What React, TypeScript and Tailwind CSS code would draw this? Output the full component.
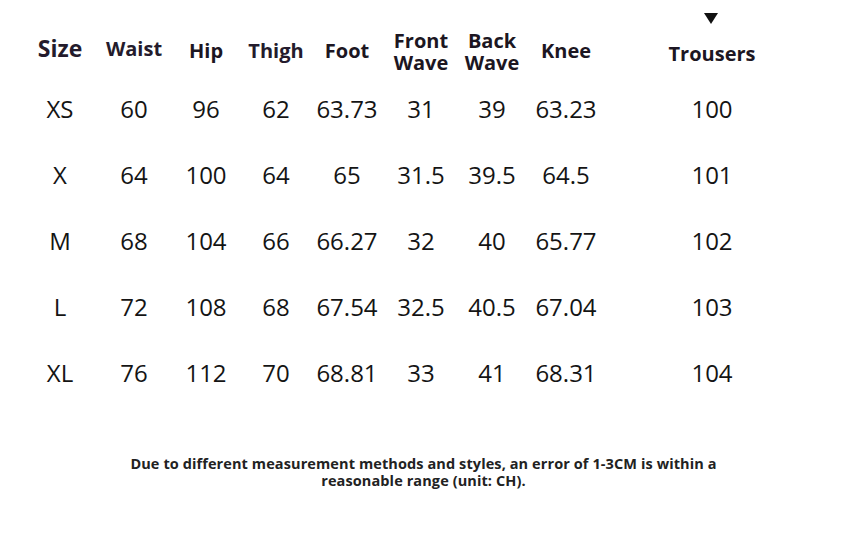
const columns = [
  { key: "size", w: "w-[72px]" },
  { key: "waist", w: "w-[76px]" },
  { key: "hip", w: "w-[68px]" },
  { key: "thigh", w: "w-[72px]" },
  { key: "foot", w: "w-[70px]" },
  { key: "front", w: "w-[78px]" },
  { key: "back", w: "w-[64px]" },
  { key: "knee", w: "w-[84px]" },
  { key: "trousers", w: "w-[208px]" },
];

const rows = [
  ["XS", "60", "96", "62", "63.73", "31", "39", "63.23", "100"],
  ["X", "64", "100", "64", "65", "31.5", "39.5", "64.5", "101"],
  ["M", "68", "104", "66", "66.27", "32", "40", "65.77", "102"],
  ["L", "72", "108", "68", "67.54", "32.5", "40.5", "67.04", "103"],
  ["XL", "76", "112", "70", "68.81", "33", "41", "68.31", "104"],
];

function Header() {
  return (
    <div className="flex h-[50px] items-center font-bold text-[20px] leading-[22px] text-[#1c1622]">
      <div className={`${columns[0].w} text-center text-[23px] text-[#241b2c] -mt-[7px]`}>Size</div>
      <div className={`${columns[1].w} text-center text-[#241b2c] -mt-[5px]`}>Waist</div>
      <div className={`${columns[2].w} text-center -mt-[1px]`}>Hip</div>
      <div className={`${columns[3].w} text-center text-[#241b2c] -mt-[1px]`}>Thigh</div>
      <div className={`${columns[4].w} text-center`}>Foot</div>
      <div className={`${columns[5].w} flex flex-col items-center pt-[2px]`}>
        <span className="leading-[22px]">Front</span>
        <span className="leading-[22px]">Wave</span>
      </div>
      <div className={`${columns[6].w} flex flex-col items-center pt-[2px]`}>
        <span className="leading-[22px]">Back</span>
        <span className="leading-[22px]">Wave</span>
      </div>
      <div className={`${columns[7].w} text-center`}>Knee</div>
      <div className={`${columns[8].w} relative text-center pt-[5px]`}>
        <svg
          className="absolute left-[96px] -top-[25px]"
          width="14"
          height="11"
          viewBox="0 0 14 11"
        >
          <path d="M0 0 H14 L7 11 Z" fill="#111" />
        </svg>
        Trousers
      </div>
    </div>
  );
}

export default function App() {
  return (
    <div
      className="w-[847px] h-[536px] bg-white text-[#141414] overflow-hidden"
      style={{ fontFamily: '"Open Sans", "Noto Sans", sans-serif' }}
    >
      <div className="pl-[24px] pt-[26px]">
        <Header />
        {rows.map((row) => (
          <div key={row[0]} className="flex h-[66px] items-center text-[24px]">
            {row.map((cell, i) => (
              <div key={i} className={`${columns[i].w} text-center`}>
                {cell}
              </div>
            ))}
          </div>
        ))}
      </div>

      {/* note */}
      <div className="mt-[49px] text-center font-bold text-[14.5px] leading-[17px] tracking-[0.1px] text-[#222]">
        Due to different measurement methods and styles, an error of 1-3CM is within a
        <br />
        reasonable range (unit: CH).
      </div>
    </div>
  );
}
